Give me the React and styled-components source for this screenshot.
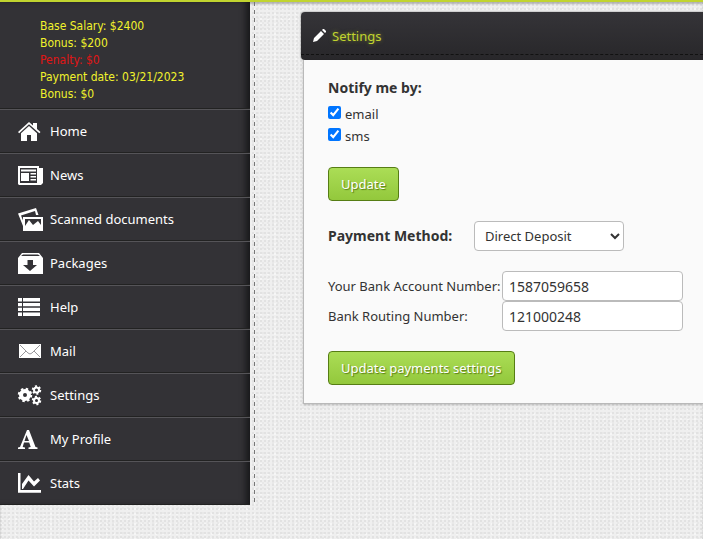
import React, { useState } from "react";
import styled, { createGlobalStyle } from "styled-components";

const GlobalStyle = createGlobalStyle`
  * {
    box-sizing: border-box;
  }
  body {
    margin: 0;
    font-family: "Noto Sans", "Open Sans", sans-serif;
    font-size: 13px;
    line-height: 22px;
    color: #333;
    background-color: #efefef;
    background-image:
      radial-gradient(circle at 1px 1px, #e2e2e2 1px, transparent 1px),
      radial-gradient(circle at 3px 3px, #e8e8e8 1px, transparent 1px),
      radial-gradient(circle at 2px 4px, #f6f6f6 1px, transparent 1px);
    background-size: 4px 4px, 5px 5px, 7px 5px;
  }
`;

const Page = styled.div`
  min-height: 100vh;
  border-top: 2px solid #c1d42f;
  box-shadow: inset 0 2px 2px rgba(0, 0, 0, 0.25);
`;
const Layout = styled.div`
  display: flex;
  align-items: flex-start;
`;
const Sidebar = styled.aside`
  flex: none;
  width: 250px;
  background: #333236;
  box-shadow: inset -6px 0 6px -2px #18181a;
`;
const Divider = styled.div`
  flex: none;
  align-self: stretch;
  width: 1px;
  margin-left: 4px;
  background: repeating-linear-gradient(#777 0 4px, transparent 4px 8px);
`;
const Summary = styled.ul`
  margin: 0;
  padding: 16px 0 5px 40px;
  list-style: none;
  font-family: "DejaVu Sans Condensed", "Noto Sans", sans-serif;
  font-size: 12px;
  line-height: 17px;
  border-bottom: 1px solid #222;
`;
const SummaryItem = styled.li`
  color: ${({ $alert }) => ($alert ? "#e01515" : "#f2f22c")};
`;
const NavLink = styled.a`
  display: flex;
  align-items: center;
  gap: 8px;
  height: 44px;
  padding-left: 18px;
  color: #fff;
  text-decoration: none;
  border-top: 1px solid #555458;
  border-bottom: 1px solid #222;
`;
const NavIcon = styled.svg`
  flex: none;
  width: 24px;
  height: 24px;
  fill: #fff;
  overflow: visible;
`;

const Main = styled.main`
  flex: 1;
  min-width: 0;
  padding: 10px 0 0 46px;
`;
const PanelHeader = styled.header`
  display: flex;
  flex-direction: column;
  height: 48px;
  background: linear-gradient(#353438, #28272a);
  border-radius: 4px 0 0 4px;
  box-shadow: 0 0 2px rgba(0, 0, 0, 0.5);
`;
const PanelTitle = styled.h1`
  display: flex;
  align-items: center;
  gap: 6px;
  height: 43px;
  margin: 0;
  padding: 5px 0 0 12px;
  font-size: 13px;
  font-weight: normal;
  color: #c1d42f;
  text-shadow: 0 0 4px rgba(193, 212, 47, 0.5);
  border-bottom: 1px dashed #111;
`;
const PanelBody = styled.section`
  margin-left: 2px;
  padding: 16px 24px 18px;
  background: #fafafa;
  border: solid #b9b9b9;
  border-width: 0 0 1px 1px;
  box-shadow: 0 1px 2px rgba(0, 0, 0, 0.2);
`;
const Form = styled.form`
  display: flex;
  flex-direction: column;
  align-items: flex-start;
  gap: 20px;
  margin-bottom: 20px;
  &:last-child {
    margin-bottom: 0;
  }
`;
const Notify = styled.fieldset`
  margin: 0;
  padding: 0;
  border: none;
`;
const Legend = styled.legend`
  padding: 0;
  margin-bottom: 3px;
  font-size: 14px;
  font-weight: bold;
  line-height: 24px;
`;
const CheckLabel = styled.label`
  display: flex;
  align-items: center;
  gap: 4px;
  height: 22px;
`;
const Checkbox = styled.input`
  width: 13px;
  height: 13px;
  margin: 0 0 4px;
  accent-color: #0075ff;
`;
const GreenButton = styled.button`
  height: 34px;
  padding: 0 12px;
  font: inherit;
  color: #fff;
  text-shadow: 1px 1px 1px rgba(60, 90, 0, 0.7);
  background: linear-gradient(#abdd56, #93c83c);
  border: 1px solid #567d14;
  border-radius: 4px;
  cursor: pointer;
`;
const MethodRow = styled.div`
  display: flex;
  align-items: center;
`;
const MethodLabel = styled.label`
  width: 146px;
  font-size: 14px;
  font-weight: bold;
`;
const Select = styled.select`
  width: 150px;
  height: 30px;
  padding: 0 6px;
  font: inherit;
  color: #333;
  background: #fff;
  border: 1px solid #bbb;
  border-radius: 4px;
`;
const Fields = styled.div`
  display: grid;
  grid-template-columns: 174px 181px;
  align-items: center;
  white-space: nowrap;
`;
const TextInput = styled.input`
  width: 100%;
  height: 30px;
  padding: 0 6px;
  font: inherit;
  font-size: 14px;
  color: #333;
  background: #fff;
  border: 1px solid #bbb;
  border-radius: 4px;
`;

const summary = [
  { text: "Base Salary: $2400" },
  { text: "Bonus: $200" },
  { text: "Penalty: $0", alert: true },
  { text: "Payment date: 03/21/2023" },
  { text: "Bonus: $0" },
];

// A toothed ring: solid body, dashed outline for the teeth
function Gear({ x, y, r, hole, teeth }) {
  const dash = (Math.PI * r) / teeth;
  const body = r - hole;
  return (
    <g fill="none" stroke="#fff">
      <circle cx={x} cy={y} r={hole + body / 2} strokeWidth={body} />
      <circle cx={x} cy={y} r={r} strokeWidth="2.5" strokeDasharray={dash} />
    </g>
  );
}

const icons = {
  home: (
    <>
      <path d="M0 13 11 3l4 3.500V4h4v6l3.500 3-1.200 1.300L11 5.300 1.200 14.300z" />
      <path d="M3 14.200 11 7l8 7.200V22h-6v-6H9v6H3z" />
    </>
  ),
  news: (
    <>
      <path fillRule="evenodd" d="M0 3h21v2h4v15l-2 2H1l-1-1zM2 5v15h17V5z" />
      <path d="M3 6.500h15v2H3zM3 10h8v8H3zM12.500 10H18v1.500h-5.500zM12.500 13H18v1.500h-5.500zM12.500 16H18v1.500h-5.500z" />
    </>
  ),
  scans: (
    <>
      <path d="M0 6.500 18 1l2.500 7h-2.500L17 4 3 8.500l2 5V19z" />
      <path fillRule="evenodd" d="M5 10h20v14H5zM7 12v10h16v-10z" />
      <path d="M7 22v-3l4-6 4 5 5-4 3 4v4z" />
    </>
  ),
  packages: (
    <path
      fillRule="evenodd"
      d="M4 2h17l4 5v16H0V7zM5 3.500 3 5h19l-2-1.500zM9.500 9h5.500v5h4l-7 6-7-6h4.500z"
    />
  ),
  help: (
    <path d="M0 3h4v3.500H0zM5 3h17v3.500H5zM0 8h4v3.200H0zM5 8h17v3.200H5zM0 12.700h4v3.300H0zM5 12.700h17v3.300H5zM0 17.500h4V21H0zM5 17.500h17V21H5z" />
  ),
  mail: (
    <>
      <path d="M1 5h22v14H1z" />
      <path
        d="M2 6l8 8q2 2 4 0l8-8M2 18l6-6M22 18l-6-6"
        fill="none"
        stroke="#99989c"
        strokeWidth="1"
      />
    </>
  ),
  settings: (
    <>
      <Gear x={7} y={12} r={6} hole={2} teeth={8} />
      <Gear x={18.500} y={7} r={3.500} hole={1.500} teeth={6} />
      <Gear x={18.500} y={17.500} r={3.500} hole={1.500} teeth={6} />
    </>
  ),
  profile: (
    <path
      fillRule="evenodd"
      d="M9 3h2l6.500 17 2 .5V22h-9v-1.500l2.200-.5-1.500-4.500H6L4.700 20l2.300.5V22H0v-1.500l2-.5zM8.500 8 6.500 14h4.500z"
    />
  ),
  stats: (
    <>
      <path d="M0 2h2.500v17H23v2.800H0z" />
      <path d="M4 18V13L10.500 4l5.500 6.500L20 7l2 2.500-6 6-5.500-6L5 18z" />
    </>
  ),
};

const links = [
  { icon: "home", label: "Home" },
  { icon: "news", label: "News" },
  { icon: "scans", label: "Scanned documents" },
  { icon: "packages", label: "Packages" },
  { icon: "help", label: "Help" },
  { icon: "mail", label: "Mail" },
  { icon: "settings", label: "Settings" },
  { icon: "profile", label: "My Profile" },
  { icon: "stats", label: "Stats" },
];

export default function App() {
  const [notify, setNotify] = useState({ email: true, sms: true });
  const [method, setMethod] = useState("Direct Deposit");
  const [account, setAccount] = useState("1587059658");
  const [routing, setRouting] = useState("121000248");

  const handleSubmit = e => e.preventDefault();

  return (
    <Page>
      <GlobalStyle />
      <Layout>
        <Sidebar>
          <Summary>
            {summary.map((item, i) => (
              <SummaryItem key={i} $alert={item.alert}>{item.text}</SummaryItem>
            ))}
          </Summary>
          <nav>
            {links.map(({ icon, label }) => (
              <NavLink key={icon} href={`#${icon}`}>
                <NavIcon viewBox="0 0 24 24" aria-hidden="true">{icons[icon]}</NavIcon>
                {label}
              </NavLink>
            ))}
          </nav>
        </Sidebar>
        <Divider />
        <Main>
          <PanelHeader>
            <PanelTitle>
              <svg width="13" height="13" viewBox="0 0 13 13" fill="#fff" aria-hidden="true">
                <path d="M0 13 1 9 8 2l3 3-7 7zM9 1l1-1h1l2 2v1l-1 1z" />
              </svg>
              Settings
            </PanelTitle>
          </PanelHeader>
          <PanelBody>
            <Form onSubmit={handleSubmit}>
              <Notify>
                <Legend>Notify me by:</Legend>
                {["email", "sms"].map(name => (
                  <CheckLabel key={name}>
                    <Checkbox
                      type="checkbox"
                      checked={notify[name]}
                      onChange={e => setNotify({ ...notify, [name]: e.target.checked })}
                    />
                    {name}
                  </CheckLabel>
                ))}
              </Notify>
              <GreenButton type="submit">Update</GreenButton>
            </Form>
            <Form onSubmit={handleSubmit}>
              <MethodRow>
                <MethodLabel htmlFor="method">Payment Method:</MethodLabel>
                <Select id="method" value={method} onChange={e => setMethod(e.target.value)}>
                  <option>Direct Deposit</option>
                  <option>Check</option>
                </Select>
              </MethodRow>
              <Fields>
                <label htmlFor="account">Your Bank Account Number:</label>
                <TextInput id="account" value={account} onChange={e => setAccount(e.target.value)} />
                <label htmlFor="routing">Bank Routing Number:</label>
                <TextInput id="routing" value={routing} onChange={e => setRouting(e.target.value)} />
              </Fields>
              <GreenButton type="submit">Update payments settings</GreenButton>
            </Form>
          </PanelBody>
        </Main>
      </Layout>
    </Page>
  );
}
